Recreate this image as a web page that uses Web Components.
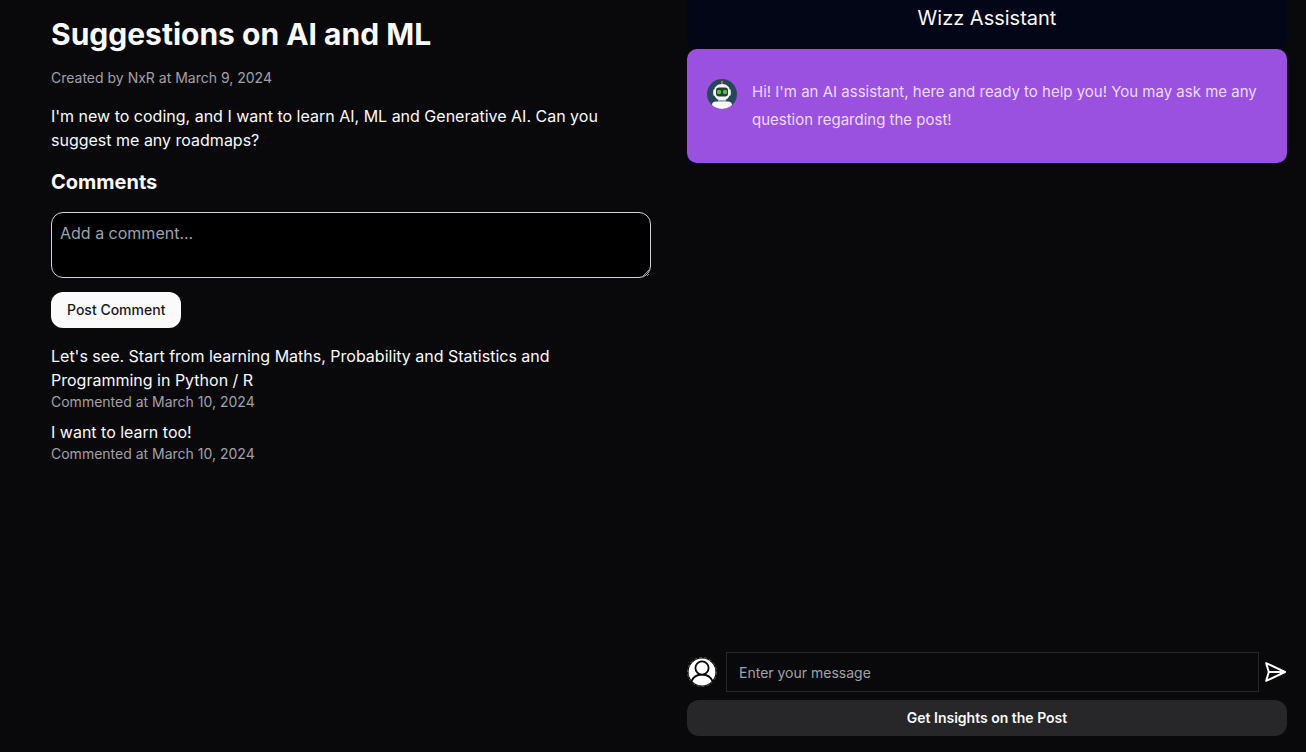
<!DOCTYPE html>
<html lang="en">
<head>
<meta charset="utf-8">
<meta name="viewport" content="width=device-width, initial-scale=1">
<title>Suggestions on AI and ML</title>
<style>
  html { background: #09090b; }
  body { margin: 0; color: #fafafa; font: 16px/24px Inter, sans-serif; }
</style>
</head>
<body>
<post-page>
  <post-article slot="post" heading="Suggestions on AI and ML" meta="Created by NxR at March 9, 2024">
    I'm new to coding, and I want to learn AI, ML and Generative AI. Can you suggest me any roadmaps?
  </post-article>
  <comment-section slot="post">
    <comment-item date="March 10, 2024">Let's see. Start from learning Maths, Probability and Statistics and Programming in Python / R</comment-item>
    <comment-item date="March 10, 2024">I want to learn too!</comment-item>
  </comment-section>
  <chat-panel slot="chat" heading="Wizz Assistant">
    <chat-message>Hi! I'm an AI assistant, here and ready to help you! You may ask me any question regarding the post!</chat-message>
  </chat-panel>
</post-page>

<script>
const define = (name, html, setup) => {
  const template = document.createElement('template');
  template.innerHTML = '<style>*{box-sizing:border-box}h1,h2,p{margin:0}</style>' + html;
  customElements.define(name, class extends HTMLElement {
    constructor() {
      super();
      this.attachShadow({ mode: 'open' }).append(template.content.cloneNode(true));
    }
    connectedCallback() { if (setup) setup(this, this.shadowRoot); }
  });
};

define('post-page', `
  <style>
    :host { display: block; }
    main { display: grid; grid-template-columns: 1fr 1fr; gap: 36px; min-height: 100vh; box-sizing: border-box; padding: 0 19px 16px 51px; }
    .post { padding-top: 16px; }
    .chat { display: grid; }
    @media (max-width: 700px) { main { grid-template-columns: 1fr; padding: 0 16px 16px; } }
  </style>
  <main>
    <div class="post"><slot name="post"></slot></div>
    <div class="chat"><slot name="chat"></slot></div>
  </main>`);

define('post-article', `
  <style>
    :host { display: flex; flex-direction: column; gap: 16px; margin-bottom: 16px; }
    h1 { font-size: 30px; line-height: 36px; font-weight: 700; }
    .meta { font-size: 14px; line-height: 20px; color: #a1a1aa; }
  </style>
  <h1></h1>
  <p class="meta"></p>
  <p><slot></slot></p>`,
  (el, root) => {
    root.querySelector('h1').textContent = el.getAttribute('heading');
    root.querySelector('.meta').textContent = el.getAttribute('meta');
  });

define('comment-section', `
  <style>
    :host { display: block; }
    h2 { font-size: 20px; line-height: 28px; font-weight: 700; margin-bottom: 16px; }
    textarea { display: block; width: 100%; height: 66px; padding: 8px; margin: 0 0 14px; font: inherit; color: inherit;
      background: #000; border: 1px solid #d1d5db; border-radius: 12px; resize: vertical; outline: none; }
    textarea::placeholder { color: #9ca3af; }
    button { height: 36px; padding: 0 16px; margin-bottom: 16px; border: 0; border-radius: 12px; background: #fafafa; color: #18181b;
      font: 500 14px/20px Inter, sans-serif; display: block; }
    .list { display: flex; flex-direction: column; gap: 8px; }
  </style>
  <h2>Comments</h2>
  <textarea placeholder="Add a comment..." aria-label="Add a comment"></textarea>
  <button type="button">Post Comment</button>
  <div class="list"><slot></slot></div>`);

define('comment-item', `
  <style>
    :host { display: block; }
    .date { font-size: 14px; line-height: 20px; color: #a1a1aa; }
  </style>
  <p><slot></slot></p>
  <p class="date"></p>`,
  (el, root) => { root.querySelector('.date').textContent = 'Commented at ' + el.getAttribute('date'); });

define('bot-avatar', `
  <style>:host, svg { display: block; width: 30px; height: 30px; }</style>
  <svg viewBox="0 0 30 30" aria-hidden="true">
    <defs><clipPath id="c"><circle cx="15" cy="15" r="15"/></clipPath></defs>
    <g clip-path="url(#c)">
      <rect width="30" height="30" fill="#264757"/>
      <path d="M15 3v3" stroke="#b9b5b8" stroke-width="1"/>
      <circle cx="15" cy="3" r="1.200" fill="#e2574c"/>
      <rect x="6" y="10" width="18" height="7" rx="2" fill="#d2d4d8"/>
      <path d="M7 13c0-5 3-8 8-8s8 3 8 8-3 8.500-8 8.500-8-3.500-8-8.500z" fill="#f6f6f8"/>
      <rect x="9" y="8.500" width="12" height="9" rx="3" fill="#2d3640"/>
      <circle cx="12" cy="13" r="2.200" fill="#4fc62f"/>
      <circle cx="18" cy="13" r="2.200" fill="#4fc62f"/>
      <path d="M11 20.500q4 2 8 0v2h-8z" fill="#aeb6be"/>
      <path d="M5 31v-5q0-3.500 4-3.500h12q4 0 4 3.500v5z" fill="#f8f8fa"/>
    </g>
  </svg>`);

define('user-avatar', `
  <style>:host, svg { display: block; width: 30px; height: 30px; }</style>
  <svg viewBox="0 0 30 30" aria-hidden="true">
    <circle cx="15" cy="15" r="14.5" fill="#09090b" stroke="#8a8a8c" stroke-width=".6" stroke-dasharray="3 2"/>
    <circle cx="15" cy="15" r="13.4" fill="#fff"/>
    <path d="M4 25C6 20 10 17.500 15 17.500S24 20 26 25" fill="none" stroke="#09090b" stroke-width="1.800"/>
    <circle cx="15" cy="11" r="6.600" fill="#fff" stroke="#09090b" stroke-width="1.800"/>
  </svg>`);

define('chat-message', `
  <style>
    :host { display: flex; gap: 15px; padding: 29px 20px; border-radius: 10px; background: #9b51e0; color: #ebdcf9;
      font-size: 15px; line-height: 28px; }
    bot-avatar { flex: none; margin-top: 1px; }
  </style>
  <bot-avatar></bot-avatar>
  <p><slot></slot></p>`);

define('chat-panel', `
  <style>
    :host { display: flex; flex-direction: column; }
    h2 { padding: 4px 16px 17px; text-align: center; font-size: 20px; line-height: 28px; font-weight: 400; background: #020617; border-radius: 0 0 10px 10px; }
    .messages { flex: 1; }
    form { display: flex; flex-direction: column; gap: 8px; margin-top: 16px; }
    .row { display: flex; align-items: center; }
    user-avatar { flex: none; margin-right: 9px; }
    input { flex: 1; min-width: 0; height: 40px; padding: 0 12px; background: transparent; border: 1px solid #27272a; border-radius: 0;
      color: inherit; font: 14px/20px Inter, sans-serif; outline: none; }
    input::placeholder { color: #a1a1aa; }
    .send { flex: none; width: 28px; height: 28px; padding: 0 0 0 4px; border: 0; background: none; color: #fff; }
    .send svg { display: block; width: 24px; height: 24px; }
    .insights { height: 36px; border: 0; border-radius: 12px; background: #27272a; color: #fafafa; font: 600 14px/20px Inter, sans-serif; }
  </style>
  <h2></h2>
  <div class="messages"><slot></slot></div>
  <form>
    <div class="row">
      <user-avatar></user-avatar>
      <input type="text" placeholder="Enter your message" aria-label="Enter your message">
      <button class="send" type="button" aria-label="Send">
        <svg viewBox="0 0 24 24" fill="none" stroke="currentColor" stroke-width="2" stroke-linejoin="round" aria-hidden="true">
          <path d="M3.200 3.200L22 12 3.200 20.800 5.800 12zM5.800 12H21"/>
        </svg>
      </button>
    </div>
    <button class="insights" type="button">Get Insights on the Post</button>
  </form>`,
  (el, root) => { root.querySelector('h2').textContent = el.getAttribute('heading'); });
</script>
</body>
</html>
